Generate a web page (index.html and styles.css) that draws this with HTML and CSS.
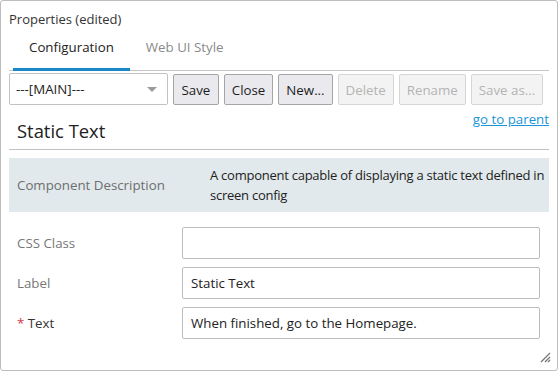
FILE: index.html
```html
<!DOCTYPE html>
<html>
<head>
<meta charset="utf-8">
<link rel="stylesheet" href="styles.css">
</head>
<body>
<div class="window">
  <div class="title">Properties (edited)</div>
  <div class="tabs">
    <div class="tab active">Configuration</div>
    <div class="tab">Web UI Style</div>
  </div>
  <div class="toolbar">
    <div class="select"><span>---[MAIN]---</span><span class="caret"></span></div>
    <button class="btn">Save</button>
    <button class="btn">Close</button>
    <button class="btn">New...</button>
    <button class="btn disabled">Delete</button>
    <button class="btn disabled">Rename</button>
    <button class="btn disabled">Save as...</button>
  </div>
  <div class="heading">
    <div class="heading-title">Static Text</div>
    <a class="parent-link" href="#">go to parent</a>
  </div>
  <div class="desc">
    <div class="desc-label">Component Description</div>
    <div class="desc-value">A component capable of displaying a static text defined in screen config</div>
  </div>
  <div class="form">
    <div class="row">
      <div class="label">CSS Class</div>
      <div class="input"></div>
    </div>
    <div class="row">
      <div class="label">Label</div>
      <div class="input">Static Text</div>
    </div>
    <div class="row">
      <div class="label required"><span class="star">*</span> Text</div>
      <div class="input">When finished, go to the Homepage.</div>
    </div>
  </div>
  <svg class="grip" width="14" height="14" viewBox="0 0 14 14">
    <path d="M12 3 L3 12 M12 7 L7 12 M12 10 L10 12" stroke="#777" stroke-width="1.3" fill="none"/>
  </svg>
</div>
</body>
</html>
```

FILE: styles.css
```css
* { box-sizing: border-box; }
body {
  margin: 0;
  font-family: "Segoe UI", "Open Sans", "Noto Sans", sans-serif;
  font-size: 13.3px;
  color: #333;
  background: #fff;
}
.window {
  position: relative;
  width: 558px;
  height: 371px;
  border: 1px solid #bdbdbd;
  border-radius: 3px;
  padding: 0 8px;
}
.title {
  padding-top: 9px;
  height: 30px;
  font-size: 13px;
  color: #333;
}
.tabs {
  display: flex;
  height: 40px;
  border-bottom: 1px solid #c6c6c6;
}
.tab {
  padding: 7px 16px 0 16px;
  color: #8a8a8a;
  font-size: 13.3px;
}
.tab.active {
  margin-left: 4px;
  color: #222;
  border-bottom: 3px solid #1a87c9;
  margin-bottom: -1px;
}
.toolbar {
  display: flex;
  gap: 5px;
  margin-top: 2px;
  height: 32px;
}
.select {
  width: 159px;
  height: 32px;
  border: 1px solid #c2c2c2;
  border-radius: 2px;
  display: flex;
  align-items: center;
  justify-content: space-between;
  padding: 0 10px 0 6px;
  color: #222;
}
.caret {
  width: 0;
  height: 0;
  border-left: 5px solid transparent;
  border-right: 5px solid transparent;
  border-top: 5px solid #9a9a9a;
}
.btn {
  font-family: inherit;
  font-size: 13.3px;
  height: 31px;
  margin-top: 1px;
  padding: 0 7px;
  background: #e9e9ee;
  border: 1px solid #a5a5a5;
  border-radius: 2px;
  color: #1e1e1e;
}
.btn:nth-of-type(1) { padding: 0 7.5px; }
.btn.disabled {
  background: #f3f3f3;
  border-color: #d6d6d6;
  color: #b4b4b4;
}
.heading {
  display: flex;
  justify-content: space-between;
  align-items: flex-start;
  height: 45px;
  border-bottom: 1px solid #c2c2c2;
}
.heading-title {
  font-size: 18.4px;
  color: #222;
  padding: 13px 0 0 8px;
}
.parent-link {
  color: #1a95d9;
  margin-top: 5px;
}
.desc {
  display: flex;
  margin-top: 8px;
  height: 54px;
  background: #e1e9ec;
  align-items: center;
}
.desc-label {
  flex: 0 0 201px;
  padding-left: 8px;
  color: #6e6e6e;
}
.desc-value {
  flex: 1;
  padding-right: 2px;
  color: #222;
  font-size: 13px;
  letter-spacing: -0.25px;
  line-height: 20px;
}
.form {
  display: flex;
  flex-direction: column;
  gap: 8px;
  margin-top: 15px;
}
.row {
  display: flex;
  align-items: center;
}
.label {
  width: 173px;
  padding-left: 8px;
  color: #777;
}
.label.required { color: #333; }
.star { color: #d6334d; }
.input {
  width: 358px;
  height: 32px;
  border: 1px solid #bdbdbd;
  border-radius: 2px;
  padding: 0 8px;
  display: flex;
  align-items: center;
  color: #222;
}
.grip {
  position: absolute;
  right: 5px;
  bottom: 6px;
}
```
